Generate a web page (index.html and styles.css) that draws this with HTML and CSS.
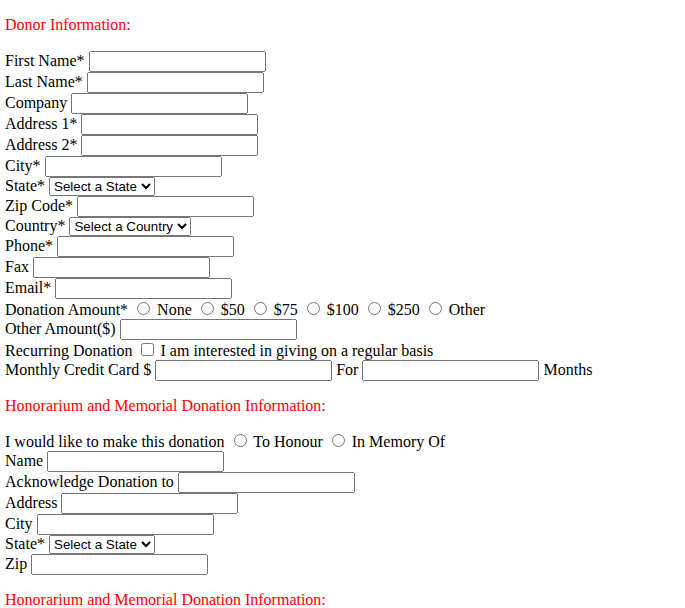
FILE: index.html
```html
<!DOCTYPE html>
<html>
<head>
<meta charset="utf-8">
<link rel="stylesheet" href="styles.css">
</head>
<body>
<form class="donation-form">
<div class="section-title first">Donor Information:</div>
<div class="rows">
First Name* <input type="text" class="field"><br>
Last Name* <input type="text" class="field"><br>
Company <input type="text" class="field"><br>
Address 1* <input type="text" class="field"><br>
Address 2* <input type="text" class="field"><br>
City* <input type="text" class="field"><br>
State* <select class="pick"><option>Select a State</option></select><br>
Zip Code* <input type="text" class="field"><br>
Country* <select class="pick wide"><option>Select a Country</option></select><br>
Phone* <input type="text" class="field"><br>
Fax <input type="text" class="field"><br>
Email* <input type="text" class="field"><br>
Donation Amount* <input type="radio" name="amt" class="radio"> None <input type="radio" name="amt" class="radio"> $50 <input type="radio" name="amt" class="radio"> $75 <input type="radio" name="amt" class="radio"> $100 <input type="radio" name="amt" class="radio"> $250 <input type="radio" name="amt" class="radio"> Other<br>
Other Amount($) <input type="text" class="field"><br>
Recurring Donation <input type="checkbox" class="check"> I am interested in giving on a regular basis<br>
Monthly Credit Card $ <input type="text" class="field"> For <input type="text" class="field"> Months
</div>
<div class="section-title">Honorarium and Memorial Donation Information:</div>
<div class="rows">
I would like to make this donation <input type="radio" name="kind" class="radio"> To Honour <input type="radio" name="kind" class="radio"> In Memory Of<br>
Name <input type="text" class="field"><br>
Acknowledge Donation to <input type="text" class="field"><br>
Address <input type="text" class="field"><br>
City <input type="text" class="field"><br>
State* <select class="pick"><option>Select a State</option></select><br>
Zip <input type="text" class="field">
</div>
<div class="section-title">Honorarium and Memorial Donation Information:</div>
</form>
</body>
</html>
```
FILE: styles.css
```css
html, body {
  background: #fff;
}
body {
  margin: 0;
  padding: 16px 5px 0 5px;
  font-family: "Liberation Serif", "Times New Roman", serif;
  font-size: 16px;
  color: #000;
}
.donation-form {
  margin: 0;
}
.section-title {
  color: #ff0000;
  line-height: 18px;
  margin: 16px 0 16px 0;
}
.section-title.first {
  margin-top: 0;
  margin-bottom: 17px;
}
.rows {
  line-height: 18px;
}
.field {
  box-sizing: border-box;
  width: 177px;
  height: 21px;
  font-family: "Liberation Sans", Arial, sans-serif;
  vertical-align: baseline;
}
.pick {
  font-family: "Liberation Sans", Arial, sans-serif;
  width: 106px;
}
.pick.wide {
  width: 122px;
}
```
